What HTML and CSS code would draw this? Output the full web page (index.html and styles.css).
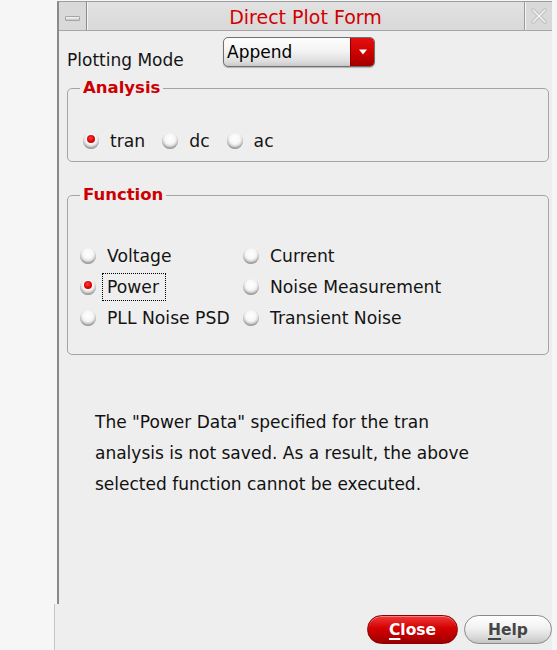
FILE: index.html
```html
<!DOCTYPE html>
<html>
<head>
<meta charset="utf-8">
<title>Direct Plot Form</title>
<link rel="stylesheet" href="styles.css">
</head>
<body>
<div class="screen">
  <div class="window">
    <div class="titlebar">
      <div class="tb-btn tb-min"><span class="dash"></span></div>
      <div class="tb-title">Direct Plot Form</div>
      <div class="tb-btn tb-close">
        <svg width="26" height="28" viewBox="0 0 26 28">
          <path d="M7 8 L19 20 M19 8 L7 20" stroke="#c4c4c4" stroke-width="4" stroke-linecap="round" fill="none"/>
          <path d="M7 8 L19 20 M19 8 L7 20" stroke="#efefef" stroke-width="1.6" stroke-linecap="round" fill="none"/>
        </svg>
      </div>
    </div>
    <div class="content">
      <div class="mode-row">
        <span class="mode-label">Plotting Mode</span>
        <div class="combo">
          <span class="combo-text">Append</span>
          <span class="combo-arrow">
            <svg width="10" height="6" viewBox="0 0 10 6"><path d="M1 0.5 H9 L5 5.5 Z" fill="#ffffff"/></svg>
          </span>
        </div>
      </div>

      <fieldset class="group analysis">
        <legend>Analysis</legend>
        <div class="radio-row">
          <label class="opt"><span class="radio on"></span><span class="opt-text">tran</span></label>
          <label class="opt"><span class="radio"></span><span class="opt-text">dc</span></label>
          <label class="opt"><span class="radio"></span><span class="opt-text">ac</span></label>
        </div>
      </fieldset>

      <fieldset class="group function">
        <legend>Function</legend>
        <div class="radio-grid">
          <label class="opt"><span class="radio"></span><span class="opt-text">Voltage</span></label>
          <label class="opt"><span class="radio"></span><span class="opt-text">Current</span></label>
          <label class="opt"><span class="radio on"></span><span class="opt-text focus">Power</span></label>
          <label class="opt"><span class="radio"></span><span class="opt-text">Noise Measurement</span></label>
          <label class="opt"><span class="radio"></span><span class="opt-text">PLL Noise PSD</span></label>
          <label class="opt"><span class="radio"></span><span class="opt-text">Transient Noise</span></label>
        </div>
      </fieldset>

      <p class="message">The "Power Data" specified for the tran<br>analysis is not saved. As a result, the above<br>selected function cannot be executed.</p>
    </div>
  </div>
  <div class="buttonbar">
    <button class="btn btn-close"><span class="mn">C</span>lose</button>
    <button class="btn btn-help"><span class="mn">H</span>elp</button>
  </div>
</div>
</body>
</html>
```

FILE: styles.css
```css
html, body {
  margin: 0;
  padding: 0;
  background: #f6f6f6;
}

body {
  font-family: "DejaVu Sans", "Liberation Sans", sans-serif;
  color: #141414;
}

.screen {
  width: 557px;
  height: 650px;
  overflow: hidden;
}

.window {
  margin-top: 1px;
  margin-left: 57px;
  width: 495px;
  height: 603px;
  box-sizing: border-box;
  border-top: 1px solid #9c9c9c;
  border-left: 2px solid #8a8a8a;
  background: #eeeeee;
  display: flex;
  flex-direction: column;
}

/* title bar */
.titlebar {
  height: 28px;
  border-bottom: 1px solid #a6a6a6;
  background: linear-gradient(#e2e2e2, #d8d8d8);
  display: flex;
  align-items: stretch;
  flex: none;
}

.tb-btn {
  width: 27px;
  flex: none;
  display: flex;
  align-items: center;
  justify-content: center;
  background: #d9d9d9;
}

.tb-min {
  border-right: 1px solid #8c8c8c;
  box-shadow: 1px 0 0 #f4f4f4;
}

.tb-min .dash {
  width: 15px;
  height: 5px;
  box-sizing: border-box;
  border: 1px solid #a4a4a4;
  border-radius: 1px;
  background: linear-gradient(#fbfbfb, #c4c4c4);
  margin-top: 4px;
}

.tb-close {
  border-left: 1px solid #9a9a9a;
  box-shadow: inset 1px 0 0 #f4f4f4;
}

.tb-title {
  flex: 1;
  display: flex;
  align-items: center;
  justify-content: center;
  font-size: 19px;
  color: #d20000;
  padding-top: 1px;
}

/* content */
.content {
  padding: 0 3px 0 8px;
  flex: 1;
}

.mode-row {
  margin-top: 6px;
  height: 30px;
  display: flex;
  align-items: flex-start;
}

.mode-label {
  width: 156px;
  flex: none;
  font-size: 17px;
  line-height: 20px;
  margin-top: 13px;
}

.combo {
  width: 152px;
  height: 30px;
  box-sizing: border-box;
  border: 1px solid #707070;
  border-radius: 5px;
  overflow: hidden;
  display: flex;
  background: linear-gradient(#fefefe 0%, #f2f2f2 50%, #dcdcdc 85%, #c8c8c8 100%);
  box-shadow: 0 1px 1px rgba(0, 0, 0, 0.25);
}

.combo-text {
  flex: 1;
  font-size: 17px;
  line-height: 20px;
  padding: 4px 0 0 3px;
  color: #000;
}

.combo-arrow {
  width: 23px;
  flex: none;
  display: flex;
  align-items: center;
  justify-content: center;
  background: linear-gradient(#e41010 0%, #cc0000 55%, #a00000 100%);
  border-left: 1px solid #8e0000;
}

/* group boxes */
.group {
  margin: 0;
  padding: 0;
  min-width: 0;
  border: 1px solid #a4a4a4;
  border-radius: 5px;
}

.group legend {
  margin-left: 12px;
  padding: 0 3px;
  font-size: 16.5px;
  line-height: 20px;
  font-weight: bold;
  color: #cc0000;
}

.analysis {
  margin-top: 11px;
  padding-bottom: 5px;
}

.function {
  margin-top: 23px;
  padding-bottom: 21px;
}

.radio-row {
  margin-top: 27px;
  height: 31px;
  padding-left: 15px;
  display: flex;
  align-items: center;
  gap: 17px;
}

.radio-grid {
  margin-top: 35px;
  padding-left: 12px;
  display: grid;
  grid-template-columns: 163px auto;
  grid-auto-rows: 31px;
}

.opt {
  display: flex;
  align-items: center;
  gap: 11px;
  font-size: 17.2px;
  line-height: 20px;
}

.radio {
  width: 16px;
  height: 16px;
  flex: none;
  border-radius: 50%;
  background: radial-gradient(circle at 50% 36%, #ffffff 0%, #f7f7f7 38%, #dadada 62%, #a8a8a8 85%, #8e8e8e 100%);
  box-shadow: inset 0 -2px 2px rgba(0, 0, 0, 0.22);
  display: flex;
  justify-content: center;
  padding-top: 2px;
  box-sizing: border-box;
}

.radio.on::after {
  content: "";
  width: 8px;
  height: 8px;
  border-radius: 50%;
  background: radial-gradient(circle at 45% 40%, #ff4040 0%, #dd0000 55%, #b00000 100%);
}

.opt-text.focus {
  border: 1px dotted #000;
  padding: 3px 6px 3px 4px;
  margin-left: -5px;
}

.message {
  margin: 52px 0 0 28px;
  font-size: 17px;
  line-height: 31px;
  color: #111;
}

/* bottom buttons */
.buttonbar {
  margin-left: 54px;
  width: 498px;
  height: 46px;
  box-sizing: border-box;
  border-left: 1px solid #c6c6c6;
  background: #eeeeee;
  display: flex;
  justify-content: flex-end;
  align-items: flex-start;
  padding-top: 11px;
  gap: 6px;
}

.btn {
  height: 29px;
  border-radius: 15px;
  font-family: "DejaVu Sans", "Liberation Sans", sans-serif;
  font-size: 15.5px;
  font-weight: bold;
  padding: 0;
  display: flex;
  align-items: center;
  justify-content: center;
  padding-top: 1px;
}

.btn .mn {
  text-decoration: underline;
  text-decoration-thickness: 2px;
  text-underline-offset: 3px;
}

.btn-close {
  width: 91px;
  color: #ffffff;
  border: 1px solid #8c0000;
  background: linear-gradient(#f03a3a 0%, #d40000 45%, #b20000 80%, #9a0000 100%);
  box-shadow: inset 0 1px 0 rgba(255, 255, 255, 0.35);
}

.btn-help {
  width: 88px;
  color: #464646;
  border: 1px solid #8a8a8a;
  background: linear-gradient(#ffffff 0%, #f1f1f1 45%, #d8d8d8 80%, #c4c4c4 100%);
}
```
